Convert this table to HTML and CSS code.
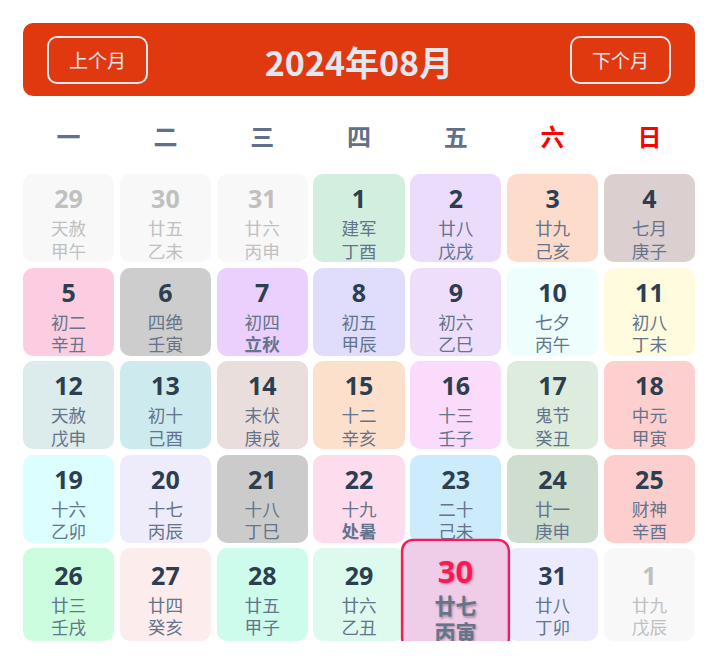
FILE: index.html
```html
<!DOCTYPE html>
<html lang="zh-CN">
<head>
<meta charset="utf-8">
<title>日历</title>
<link rel="stylesheet" href="styles.css">
</head>
<body>
<div class="page">
  <div class="calendar">
    <header class="cal-header">
      <button class="nav-btn">上个月</button>
      <h1 class="title">2024年08月</h1>
      <button class="nav-btn">下个月</button>
    </header>
    <div class="weekdays">
      <div class="wd">一</div><div class="wd">二</div><div class="wd">三</div><div class="wd">四</div><div class="wd">五</div><div class="wd weekend">六</div><div class="wd weekend">日</div>
    </div>
    <div class="days">
      <div class="day other" style="background:#f8f8f8"><span class="num">29</span><span class="lunar">天赦</span><span class="gz">甲午</span></div>
      <div class="day other" style="background:#f8f8f8"><span class="num">30</span><span class="lunar">廿五</span><span class="gz">乙未</span></div>
      <div class="day other" style="background:#f8f8f8"><span class="num">31</span><span class="lunar">廿六</span><span class="gz">丙申</span></div>
      <div class="day" style="background:#d2eedf"><span class="num">1</span><span class="lunar">建军</span><span class="gz">丁酉</span></div>
      <div class="day" style="background:#ecdcfb"><span class="num">2</span><span class="lunar">廿八</span><span class="gz">戊戌</span></div>
      <div class="day" style="background:#fddccc"><span class="num">3</span><span class="lunar">廿九</span><span class="gz">己亥</span></div>
      <div class="day" style="background:#dccfcf"><span class="num">4</span><span class="lunar">七月</span><span class="gz">庚子</span></div>

      <div class="day" style="background:#fccde0"><span class="num">5</span><span class="lunar">初二</span><span class="gz">辛丑</span></div>
      <div class="day" style="background:#cdcdcd"><span class="num">6</span><span class="lunar">四绝</span><span class="gz">壬寅</span></div>
      <div class="day" style="background:#ebcffd"><span class="num">7</span><span class="lunar">初四</span><span class="gz term">立秋</span></div>
      <div class="day" style="background:#dfdcfc"><span class="num">8</span><span class="lunar">初五</span><span class="gz">甲辰</span></div>
      <div class="day" style="background:#eedefb"><span class="num">9</span><span class="lunar">初六</span><span class="gz">乙巳</span></div>
      <div class="day" style="background:#edfefd"><span class="num">10</span><span class="lunar">七夕</span><span class="gz">丙午</span></div>
      <div class="day" style="background:#fefbdf"><span class="num">11</span><span class="lunar">初八</span><span class="gz">丁未</span></div>

      <div class="day" style="background:#dcebeb"><span class="num">12</span><span class="lunar">天赦</span><span class="gz">戊申</span></div>
      <div class="day" style="background:#cdeaee"><span class="num">13</span><span class="lunar">初十</span><span class="gz">己酉</span></div>
      <div class="day" style="background:#eadedd"><span class="num">14</span><span class="lunar">末伏</span><span class="gz">庚戌</span></div>
      <div class="day" style="background:#fde0cc"><span class="num">15</span><span class="lunar">十二</span><span class="gz">辛亥</span></div>
      <div class="day" style="background:#fadbfb"><span class="num">16</span><span class="lunar">十三</span><span class="gz">壬子</span></div>
      <div class="day" style="background:#ddecdd"><span class="num">17</span><span class="lunar">鬼节</span><span class="gz">癸丑</span></div>
      <div class="day" style="background:#fdcfcf"><span class="num">18</span><span class="lunar">中元</span><span class="gz">甲寅</span></div>

      <div class="day" style="background:#dcfefe"><span class="num">19</span><span class="lunar">十六</span><span class="gz">乙卯</span></div>
      <div class="day" style="background:#eeecfb"><span class="num">20</span><span class="lunar">十七</span><span class="gz">丙辰</span></div>
      <div class="day" style="background:#cccbcb"><span class="num">21</span><span class="lunar">十八</span><span class="gz">丁巳</span></div>
      <div class="day" style="background:#fcdced"><span class="num">22</span><span class="lunar">十九</span><span class="gz term">处暑</span></div>
      <div class="day" style="background:#cdecfb"><span class="num">23</span><span class="lunar">二十</span><span class="gz">己未</span></div>
      <div class="day" style="background:#cfddcf"><span class="num">24</span><span class="lunar">廿一</span><span class="gz">庚申</span></div>
      <div class="day" style="background:#fdcece"><span class="num">25</span><span class="lunar">财神</span><span class="gz">辛酉</span></div>

      <div class="day" style="background:#cdfddf"><span class="num">26</span><span class="lunar">廿三</span><span class="gz">壬戌</span></div>
      <div class="day" style="background:#fdecec"><span class="num">27</span><span class="lunar">廿四</span><span class="gz">癸亥</span></div>
      <div class="day" style="background:#cdfbec"><span class="num">28</span><span class="lunar">廿五</span><span class="gz">甲子</span></div>
      <div class="day" style="background:#dcfaee"><span class="num">29</span><span class="lunar">廿六</span><span class="gz">乙丑</span></div>
      <div class="day today" style="background:#efcde9"><span class="num">30</span><span class="lunar">廿七</span><span class="gz">丙寅</span></div>
      <div class="day" style="background:#ecebfd"><span class="num">31</span><span class="lunar">廿八</span><span class="gz">丁卯</span></div>
      <div class="day other" style="background:#f8f8f8"><span class="num">1</span><span class="lunar">廿九</span><span class="gz">戊辰</span></div>
    </div>
  </div>
</div>
</body>
</html>
```

FILE: styles.css
```css
* { box-sizing: border-box; }

body {
  margin: 0;
  background: #ffffff;
  font-family: "Noto Sans", "Noto Sans CJK SC", sans-serif;
}

.page {
  padding: 23px 23px 0 23px;
}

.calendar {
  width: 672px;
}

.cal-header {
  display: flex;
  justify-content: space-between;
  align-items: center;
  background: #e0390f;
  border-radius: 10px;
  padding: 12.5px 24px;
}

.nav-btn {
  font-family: "Noto Sans CJK SC", sans-serif;
  font-size: 19px;
  line-height: 28px;
  font-weight: 400;
  color: #e2e8f0;
  background: transparent;
  border: 2px solid #e2e8f0;
  border-radius: 10px;
  padding: 8px 20px;
}

.title {
  margin: 0;
  padding-top: 4px;
  font-family: "Noto Sans CJK SC", sans-serif;
  font-size: 34px;
  line-height: 44px;
  font-weight: 700;
  color: #e2e8f0;
}

.weekdays {
  display: grid;
  grid-template-columns: repeat(7, 1fr);
  column-gap: 5.6px;
  margin: 18px 0 16px;
}

.wd {
  text-align: center;
  font-family: "Noto Sans CJK SC", sans-serif;
  font-size: 24px;
  line-height: 44px;
  font-weight: 700;
  color: #607089;
}

.wd.weekend {
  color: #ff0000;
}

.days {
  display: grid;
  grid-template-columns: repeat(7, 1fr);
  gap: 5.6px;
}

.day {
  display: flex;
  flex-direction: column;
  align-items: center;
  justify-content: center;
  border-radius: 10px;
  padding-top: 5px;
}

.num {
  font-family: "Noto Sans", sans-serif;
  font-size: 25px;
  line-height: 38px;
  font-weight: 700;
  color: #2c3e50;
}

.lunar,
.gz {
  font-size: 17.6px;
  line-height: 22.5px;
  color: #64748b;
}

.gz.term {
  font-weight: 700;
}

.day.other .num,
.day.other .lunar,
.day.other .gz {
  color: #c0c0c0;
}

.day.today {
  position: relative;
  z-index: 1;
  transform: scale(1.2);
  border: 2px solid #ff1654;
  padding: 6.5px 0 2.5px;
}

.day.today .num {
  font-size: 26px;
  line-height: 36px;
  color: #ff1654;
  text-shadow: 1px 1px 2px rgba(0, 0, 0, 0.3);
}

.day.today .lunar,
.day.today .gz {
  font-size: 17.6px;
  line-height: 22px;
  font-weight: 700;
  text-shadow: 1px 1px 2px rgba(0, 0, 0, 0.3);
}
```
